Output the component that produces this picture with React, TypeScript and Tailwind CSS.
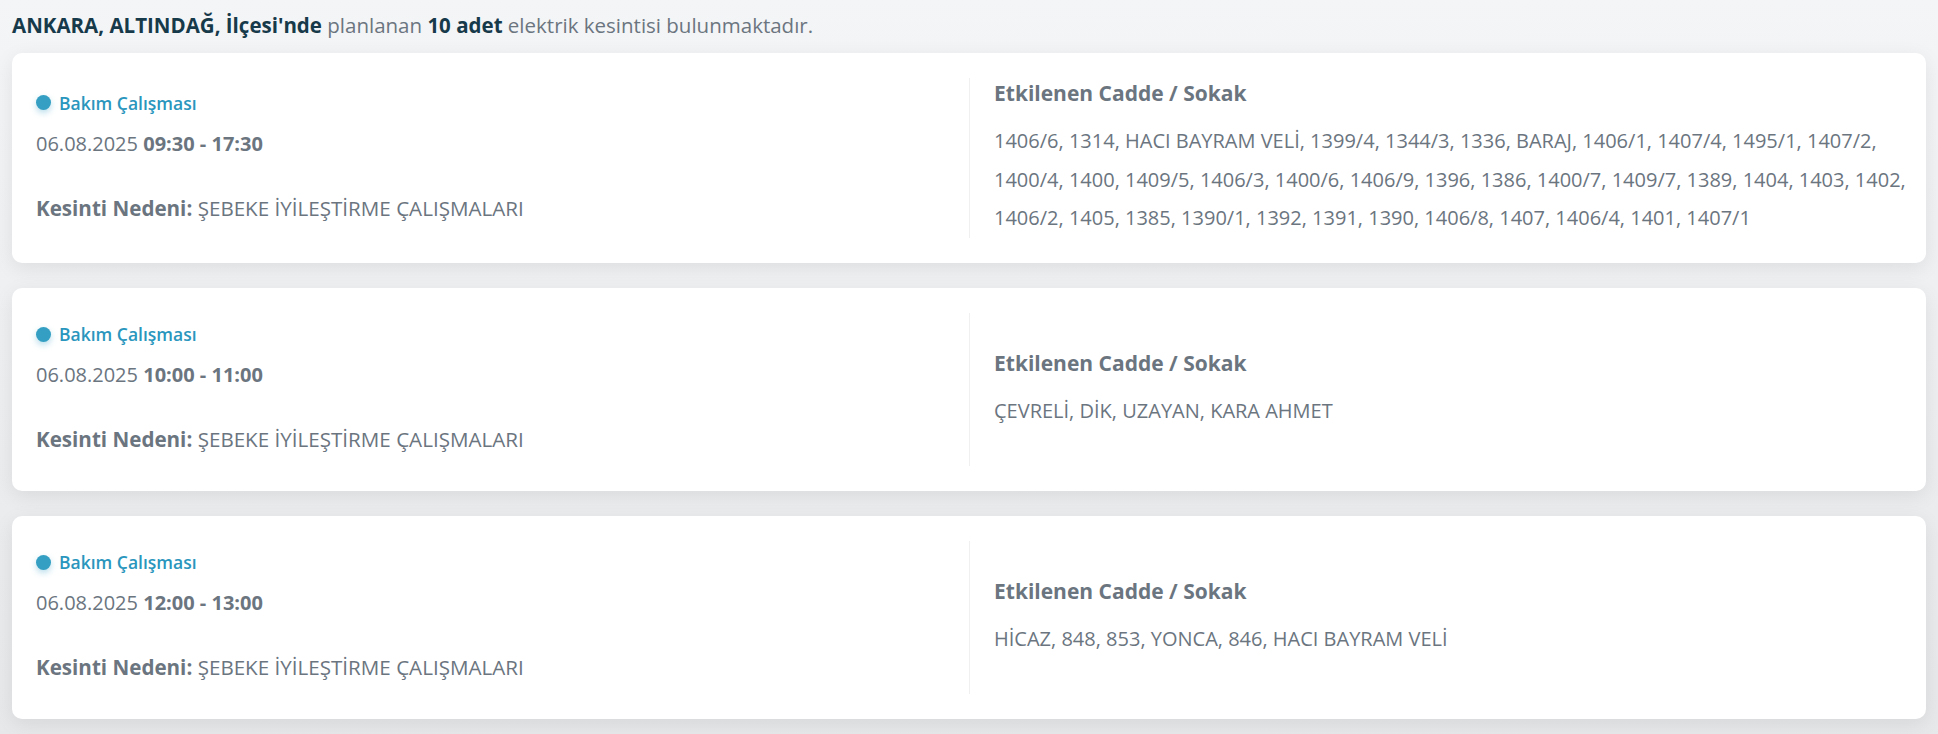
import React from 'react';

interface Outage {
  date: string;
  time: string;
  reason: string;
  streets: string;
}

const outages: Outage[] = [
  {
    date: '06.08.2025',
    time: '09:30 - 17:30',
    reason: 'ŞEBEKE İYİLEŞTİRME ÇALIŞMALARI',
    streets:
      '1406/6, 1314, HACI BAYRAM VELİ, 1399/4, 1344/3, 1336, BARAJ, 1406/1, 1407/4, 1495/1, 1407/2, 1400/4, 1400, 1409/5, 1406/3, 1400/6, 1406/9, 1396, 1386, 1400/7, 1409/7, 1389, 1404, 1403, 1402, 1406/2, 1405, 1385, 1390/1, 1392, 1391, 1390, 1406/8, 1407, 1406/4, 1401, 1407/1',
  },
  {
    date: '06.08.2025',
    time: '10:00 - 11:00',
    reason: 'ŞEBEKE İYİLEŞTİRME ÇALIŞMALARI',
    streets: 'ÇEVRELİ, DİK, UZAYAN, KARA AHMET',
  },
  {
    date: '06.08.2025',
    time: '12:00 - 13:00',
    reason: 'ŞEBEKE İYİLEŞTİRME ÇALIŞMALARI',
    streets: 'HİCAZ, 848, 853, YONCA, 846, HACI BAYRAM VELİ',
  },
];

function OutageCard({ item }: { item: Outage }) {
  return (
    <div className="rounded-[10px] bg-white shadow-[0_5px_20px_rgba(0,0,0,0.08)] py-[25px] grid grid-cols-2 min-h-[203px]">
      {/* Left: type, time, reason */}
      <div className="pl-6 pr-6 flex flex-col justify-center">
        <div className="flex items-center gap-2 h-5">
          <span className="w-[15px] h-[15px] rounded-full bg-[#349fc2] shadow-[0_3px_6px_rgba(52,159,194,0.35)]" />
          <span className="text-[17.5px] font-semibold text-[#2a96bd]">Bakım Çalışması</span>
        </div>
        <div className="mt-4 text-[20px] leading-[30px] text-[#6b7580]">
          {item.date} <span className="font-bold">{item.time}</span>
        </div>
        <div className="mt-[34px] text-[20.6px] leading-[30px] text-[#6b7580]">
          <span className="font-bold">Kesinti Nedeni:</span> {item.reason}
        </div>
      </div>

      {/* Right: affected streets */}
      <div className="border-l border-[#f0f0f0] pl-6 pr-4 flex flex-col justify-center">
        <div className="text-[21px] leading-[30px] font-bold text-[#6b7580]">Etkilenen Cadde / Sokak</div>
        <div className="mt-[14px] text-[20px] leading-[38.5px] text-[#6b7580]">{item.streets}</div>
      </div>
    </div>
  );
}

export default function App() {
  return (
    <div className="min-h-screen bg-gradient-to-b from-[#f4f5f7] to-[#e7e8ea] px-3 pt-[12px] pb-6 font-['Open_Sans',sans-serif]">
      <p className="text-[20.5px] leading-[26px] text-[#6b7580]">
        <span className="font-bold text-[#173a4a]">ANKARA, ALTINDAĞ, İlçesi'nde</span> planlanan{' '}
        <span className="font-bold text-[#173a4a]">10 adet</span> elektrik kesintisi bulunmaktadır.
      </p>
      <div className="mt-[15px] flex flex-col gap-[25px]">
        {outages.map((o, i) => (
          <OutageCard key={i} item={o} />
        ))}
      </div>
    </div>
  );
}
